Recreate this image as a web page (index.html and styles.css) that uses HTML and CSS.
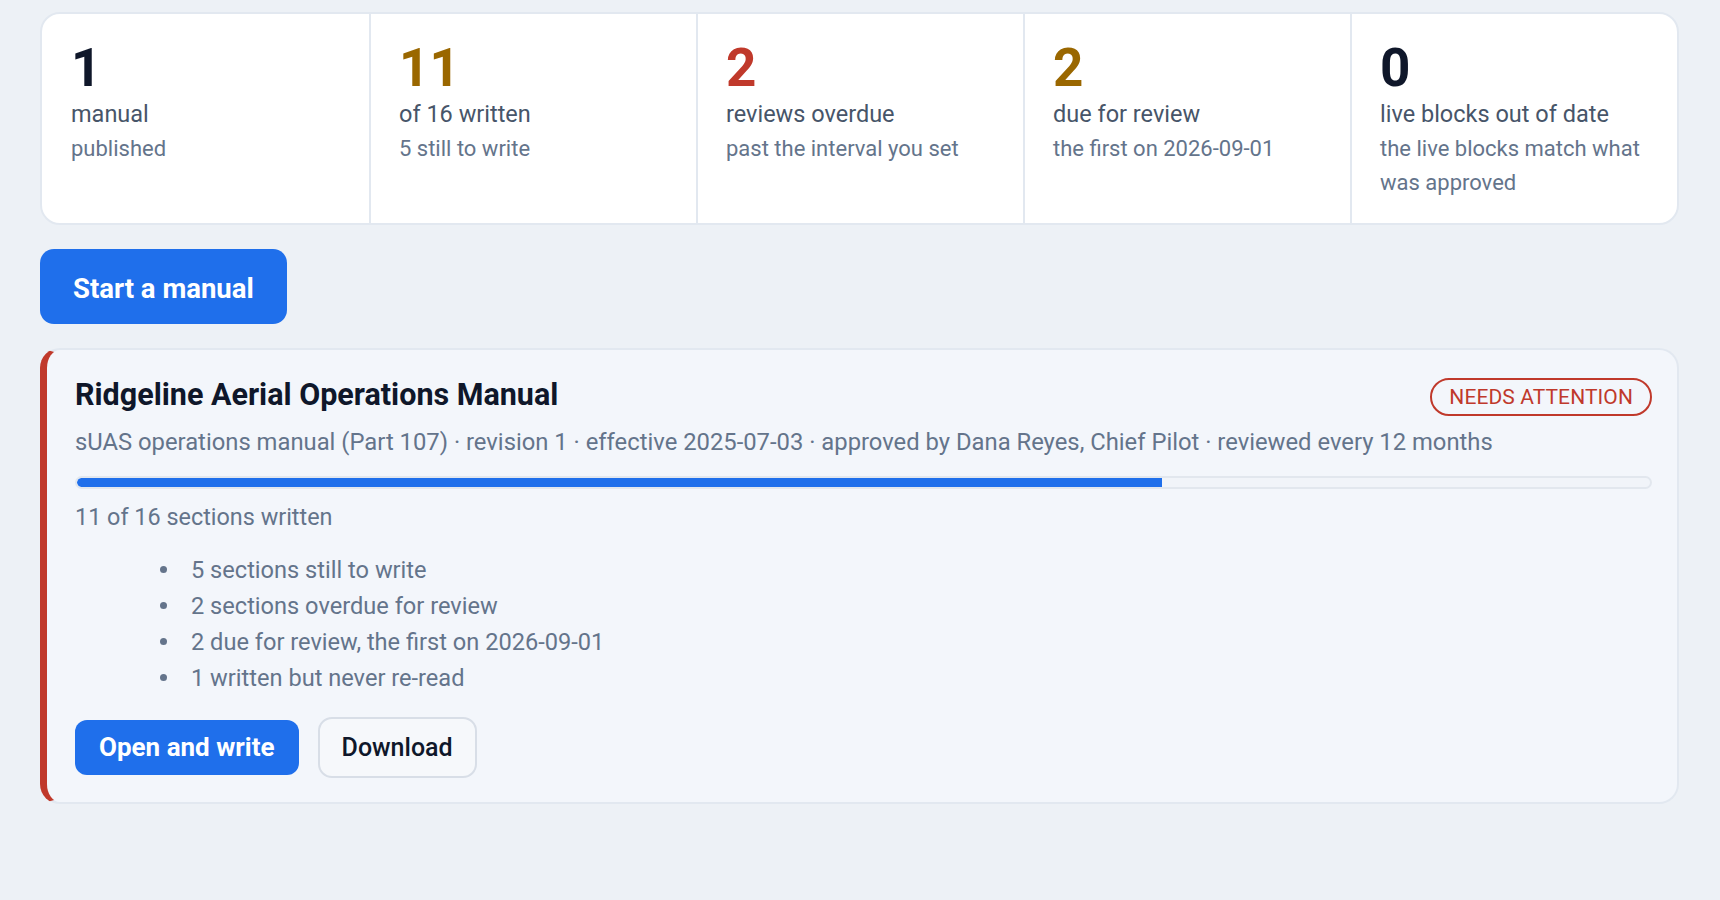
FILE: index.html
```html
<!DOCTYPE html>
<html lang="en">
<head>
<meta charset="utf-8">
<title>Manuals</title>
<link rel="stylesheet" href="styles.css">
</head>
<body>
<main class="page">
  <section class="stats">
    <div class="stat">
      <div class="stat-num">1</div>
      <div class="stat-label">manual</div>
      <div class="stat-sub">published</div>
    </div>
    <div class="stat">
      <div class="stat-num warn">11</div>
      <div class="stat-label">of 16 written</div>
      <div class="stat-sub">5 still to write</div>
    </div>
    <div class="stat">
      <div class="stat-num bad">2</div>
      <div class="stat-label">reviews overdue</div>
      <div class="stat-sub">past the interval you set</div>
    </div>
    <div class="stat">
      <div class="stat-num warn">2</div>
      <div class="stat-label">due for review</div>
      <div class="stat-sub">the first on 2026-09-01</div>
    </div>
    <div class="stat">
      <div class="stat-num">0</div>
      <div class="stat-label">live blocks out of date</div>
      <div class="stat-sub">the live blocks match what was approved</div>
    </div>
  </section>

  <div class="actions">
    <button class="btn-start" type="button">Start a manual</button>
  </div>

  <article class="card">
    <div class="card-head">
      <h2 class="card-title">Ridgeline Aerial Operations Manual</h2>
      <span class="badge">NEEDS ATTENTION</span>
    </div>
    <p class="card-meta">sUAS operations manual (Part 107) · revision 1 · effective 2025-07-03 · approved by Dana Reyes, Chief Pilot · reviewed every 12 months</p>
    <div class="progress"><div class="progress-fill" style="width: 69%"></div></div>
    <p class="card-count">11 of 16 sections written</p>
    <ul class="card-list">
      <li>5 sections still to write</li>
      <li>2 sections overdue for review</li>
      <li>2 due for review, the first on 2026-09-01</li>
      <li>1 written but never re-read</li>
    </ul>
    <div class="card-buttons">
      <button class="btn-primary" type="button">Open and write</button>
      <button class="btn-secondary" type="button">Download</button>
    </div>
  </article>
</main>
</body>
</html>
```

FILE: styles.css
```css
* {
  box-sizing: border-box;
}

html, body {
  margin: 0;
  padding: 0;
  background: #edf1f6;
}

body {
  font-family: Roboto, "Noto Sans", "Liberation Sans", sans-serif;
  color: #0f172a;
}

.page {
  padding: 12px 41px 40px 40px;
}

/* stats strip */
.stats {
  display: grid;
  grid-template-columns: repeat(5, 1fr);
  background: #ffffff;
  border: 2px solid #e2e8f0;
  border-radius: 20px;
  overflow: hidden;
}

.stat {
  padding: 25px 28px 23px 29px;
}

.stat + .stat {
  border-left: 2px solid #e2e8f0;
  padding-left: 28px;
}

.stat-num {
  font-size: 53px;
  font-weight: 700;
  line-height: 58px;
  color: #0f172a;
}

.stat-num.warn {
  color: #9a6700;
}

.stat-num.bad {
  color: #c0392b;
}

.stat-label {
  font-size: 23.5px;
  line-height: 35px;
  color: #475569;
}

.stat-sub {
  font-size: 22px;
  line-height: 34px;
  color: #64748b;
}

/* start button */
.actions {
  margin-top: 24px;
  display: flex;
}

.btn-start {
  font-family: inherit;
  font-size: 27.5px;
  font-weight: 700;
  line-height: 35px;
  color: #ffffff;
  background: #1f6feb;
  border: none;
  border-radius: 14px;
  padding: 22px 33px 18px;
}

/* manual card */
.card {
  margin-top: 24px;
  background: #f3f6fb;
  border: 2px solid #e2e8f0;
  border-left: 7px solid #c0392b;
  border-radius: 20px;
  padding: 30px 25px 24px 28px;
}

.card-head {
  display: flex;
  justify-content: space-between;
  align-items: flex-start;
  gap: 24px;
}

.card-title {
  margin: 0;
  font-size: 30.5px;
  font-weight: 700;
  line-height: 30px;
  color: #0f172a;
}

.badge {
  display: inline-block;
  margin-top: -2px;
  font-size: 21px;
  line-height: 34px;
  letter-spacing: 0.1px;
  color: #c0392b;
  border: 2px solid #c0392b;
  border-radius: 999px;
  padding: 0 17px;
  white-space: nowrap;
}

.card-meta {
  margin: 8.5px 0 0;
  font-size: 23.8px;
  line-height: 35px;
  color: #64748b;
}

.progress {
  margin-top: 16px;
  height: 13px;
  border: 2px solid #e2e7ee;
  border-radius: 999px;
  background: #f1f4f9;
  overflow: hidden;
}

.progress-fill {
  height: 100%;
  background: #1f6feb;
  border-radius: 999px 0 0 999px;
}

.card-count {
  margin: 11px 0 0;
  font-size: 23.4px;
  line-height: 35px;
  color: #64748b;
}

.card-list {
  list-style: none;
  margin: 17px 0 0;
  padding: 0 0 0 85px;
}

.card-list li {
  display: flex;
  align-items: center;
  font-size: 23.6px;
  line-height: 36px;
  color: #64748b;
}

.card-list li::before {
  content: "";
  flex: none;
  width: 7px;
  height: 7px;
  border-radius: 50%;
  background: #64748b;
  margin-right: 24px;
}

.card-buttons {
  margin-top: 21px;
  display: flex;
  align-items: center;
  gap: 19px;
}

.btn-primary {
  font-family: inherit;
  font-size: 26px;
  font-weight: 700;
  line-height: 33px;
  color: #ffffff;
  background: #1f6feb;
  border: none;
  border-radius: 12px;
  padding: 11px 24px;
}

.btn-secondary {
  font-family: inherit;
  font-size: 25px;
  font-weight: 500;
  line-height: 33px;
  color: #0f172a;
  background: #f6f8fb;
  border: 2px solid #d8dee7;
  border-radius: 14px;
  padding: 12px 22px;
}
```
